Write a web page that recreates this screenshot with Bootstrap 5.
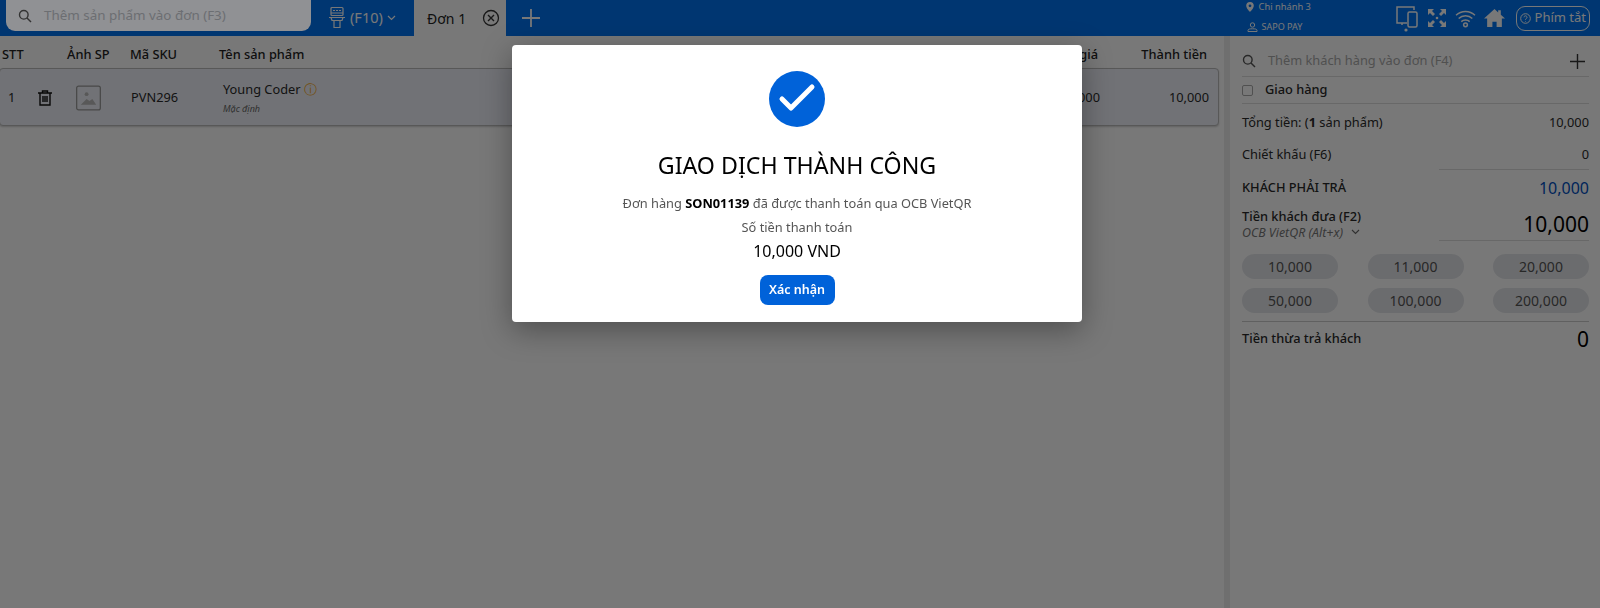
<!DOCTYPE html>
<html lang="vi">
<head>
  <meta charset="UTF-8">
  <title>Giao dịch thành công</title>
  <meta name="viewport" content="width=device-width, initial-scale=1">
  <link href="https://cdn.jsdelivr.net/npm/bootstrap@5.3.3/dist/css/bootstrap.min.css" rel="stylesheet">
  <style>
    html, body { height: 100%; overflow: hidden; }
    body { font-family: "Noto Sans", sans-serif; font-size: 12.8px; color: #2a2a2a; background: #fff; }
    .pos-topbar { height: 36px; background: #0074f0; }
    /* the reference keeps this field lighter than the dimmed page */
    .pos-search { position: relative; z-index: 1051; width: 305px; height: 31px; margin-left: 6px; background: #909194; border-radius: 0 0 9px 9px; padding: 0 12px; color: #6c6e72; font-size: 13.400px; }
    .pos-f10 { width: 86px; margin-left: 17px; color: #fff; font-size: 14.500px; }
    .pos-tab { width: 92px; height: 36px; background: #fff; color: #222; font-size: 14px; padding: 0 6px 0 13px; }
    .pos-plus { width: 50px; }
    .pos-branch { width: 152px; margin-left: auto; margin-bottom: 3px; font-size: 9.300px; color: #fff; line-height: 1; gap: 10px; }
    .pos-branch svg { flex: none; }
    .pos-pin { margin-left: 3px; gap: 5px; }
    .pos-pay-name { font-size: 9px; }
    .pos-shortcut { height: 25px; border: 1.5px solid #fff; border-radius: 9px; padding: 0 3px; color: #fff; font-size: 13px; margin: 0 10px 0 3px; }
    .pos-main { height: 572px; }
    .pos-left { width: 1224px; flex: none; }
    .pos-gutter { width: 6px; flex: none; background: #ececec; }
    .pos-right { flex: 1; padding: 10px 11px 0 12px; }
    .pos-grid { display: grid; grid-template-columns: 65px 63px 89px 1fr 44px 109px; }
    .pos-head { height: 32px; font-weight: 500; padding: 5px 17px 0 2px; color: #222; }
    .pos-row { grid-template-columns: 66px 65px 88px 1fr 44px 109px; height: 58px; margin-left: -1px; width: 1220px; border: 1px solid #bbb; border-radius: 4px; background: #f0f3fa; box-shadow: 0 1px 2px rgba(0,0,0,.2); padding: 2px 9px 0 0; }
    .pos-one { width: 30px; }
    .pos-thumb { padding-left: 10px; }
    .pos-info { color: #f5a623; }
    .pos-sub { font-size: 9px; font-style: italic; color: #666; margin-top: 3px; }
    .pos-cust { height: 31px; border-bottom: 1px solid #ddd; color: #aaa; }
    .pos-cust .pos-add { margin-right: 4px; }
    .pos-check { width: 11px; height: 11px; border: 1px solid #aaa; border-radius: 2px; margin-right: 12px; }
    .pos-ship { height: 27px; border-bottom: 1px solid #ddd; font-weight: 500; }
    .pos-line { height: 32px; }
    .pos-sum { margin-top: 3px; }
    .pos-duerow { margin-top: 1px; }
    .pos-amount { width: 150px; text-align: right; }
    .pos-under { border-bottom: 1px solid #ddd; padding-bottom: 5px; margin-top: 5px; }
    .pos-due { color: #0050c0; font-size: 16px; }
    .pos-pay { margin-top: 2px; }
    .pos-paylabel { line-height: 17px; font-weight: 500; }
    .pos-big { font-size: 21px; color: #000; line-height: 24px; }
    .pos-big.pos-under { margin-top: 6px; padding-bottom: 4px; }
    .pos-method { font-size: 12.400px; font-style: italic; color: #777; line-height: 15px; }
    .pos-pills { display: grid; grid-template-columns: repeat(3, 96px); justify-content: space-between; row-gap: 9px; margin-top: 13px; padding-bottom: 8px; border-bottom: 1px solid #ccc; }
    .pos-pill { height: 25px; border-radius: 13px; background: #e4e6ea; color: #555; font-size: 14px; }
    .pos-rest { margin-top: 5px; }
    .modal-backdrop.show { opacity: .53; }
    .pos-dialog { max-width: 570px; margin: 45px 0 0 512px; }
    .pos-dialog .modal-content { height: 277px; border: 0; border-radius: 4px; box-shadow: 0 8px 30px rgba(0,0,0,.35); padding-top: 26px; color: #000; }
    .pos-title { font-size: 23.200px; font-weight: 400; margin: 22px 0 0; line-height: 32px; }
    .pos-text { color: #555; margin-top: 10px; line-height: 24px; }
    .pos-total { font-size: 16px; line-height: 24px; }
    .pos-confirm { height: 30px; width: 75px; padding: 0; background: #0062d9; border: 0; border-radius: 8px; font-size: 12.500px; font-weight: 600; margin-top: 12px; }
  </style>
</head>
<body>

  <div class="pos-topbar d-flex align-items-center">
    <div class="pos-search d-flex align-items-center gap-2 align-self-start">
      <svg width="14" height="14" viewBox="0 0 14 14" fill="none" stroke="#333" stroke-width="1.4"><circle cx="5.8" cy="5.8" r="4.3"/><path d="M9 9l4 4"/></svg>
      <span class="ms-1">Thêm sản phẩm vào đơn (F3)</span>
    </div>
    <div class="pos-f10 d-flex align-items-center gap-1">
      <svg width="18" height="24" viewBox="0 0 18 24" fill="none" stroke="#fff" stroke-width="1.2"><rect x="3" y="1.500" width="12" height="8" rx="1"/><path d="M5 4.500h2M8 4.500h2M11 4.500h2M3 7h12M1 11.500h16M3 11.500l1 3h10l1-3M6 14.500v7h6v-7"/></svg>
      <span>(F10)</span>
      <svg width="9" height="6" viewBox="0 0 9 6" fill="none" stroke="#fff" stroke-width="1.2"><path d="M1 1l3.500 3.500L8 1"/></svg>
    </div>
    <div class="pos-tab d-flex align-items-center justify-content-between">
      <span>Đơn 1</span>
      <svg width="18" height="18" viewBox="0 0 18 18" fill="none" stroke="#333" stroke-width="1.3"><circle cx="9" cy="9" r="7.500"/><path d="M6 6l6 6M12 6l-6 6" stroke-width="1.400"/></svg>
    </div>
    <div class="pos-plus d-flex justify-content-center">
      <svg width="20" height="20" viewBox="0 0 20 20" stroke="#fff" stroke-width="1.800"><path d="M10 1v18M1 10h18"/></svg>
    </div>
    <div class="pos-branch d-flex flex-column">
      <div class="pos-pin d-flex align-items-center">
        <svg width="8" height="10" viewBox="0 0 8 10" fill="#fff"><path d="M4 0a3.800 3.800 0 0 0-3.800 3.800C.2 6.500 4 10 4 10s3.800-3.500 3.800-6.200A3.800 3.800 0 0 0 4 0zm0 5.200a1.400 1.400 0 1 1 0-2.800 1.400 1.400 0 0 1 0 2.800z"/></svg>
        <span>Chi nhánh 3</span>
      </div>
      <div class="pos-pay-name d-flex align-items-center gap-1 ms-1">
        <svg width="11" height="10" viewBox="0 0 11 10" fill="none" stroke="#fff"><circle cx="5.500" cy="3" r="2.200"/><path d="M1 9.500h9V8.500C10 7 8 6.800 5.500 6.800S1 7 1 8.500z"/></svg>
        <span>SAPO PAY</span>
      </div>
    </div>
    <div class="d-flex align-items-center gap-2">
      <svg width="24" height="28" viewBox="0 0 24 28" fill="none" stroke="#fff" stroke-width="1.500"><path d="M19 6V3H2v16h10M7 19v2"/><rect x="13" y="8" width="9" height="15" rx="1.500"/><circle cx="11" cy="26" r="1.600" fill="#fff" stroke="none"/></svg>
      <svg width="20" height="20" viewBox="0 0 20 20" fill="#fff"><path d="M1 1h6L5 3l3 3-2 2-3-3-2 2zM19 1v6l-2-2-3 3-2-2 3-3-2-2zM1 19v-6l2 2 3-3 2 2-3 3 2 2zM19 19h-6l2-2-3-3 2-2 3 3 2-2z"/><circle cx="10" cy="10" r="1.300"/></svg>
      <svg width="21" height="19" viewBox="0 0 20 18" fill="none" stroke="#fff" stroke-width="1.400"><path d="M1 6c5-5 13-5 18 0M3.500 9c3.500-3.500 9.500-3.500 13 0M6 12c2.200-2 5.800-2 8 0"/><circle cx="10" cy="15" r="1.800"/></svg>
      <svg width="21" height="20" viewBox="0 0 20 19" fill="#fff"><path d="M10 1L0 10h3v8h5v-5h4v5h5v-8h3l-4-3.600V2h-2.500v2.200z"/></svg>
      <div class="pos-shortcut d-flex align-items-center gap-1">
        <svg width="11" height="11" viewBox="0 0 11 11" fill="none" stroke="#fff"><circle cx="5.500" cy="5.500" r="4.800"/><path d="M4 4.300a1.500 1.500 0 1 1 2.300 1.300c-.6.300-.8.600-.8 1.100M5.500 8v.6"/></svg>
        <span>Phím tắt</span>
      </div>
    </div>
  </div>

  <div class="pos-main d-flex">
    <div class="pos-left">
      <div class="pos-grid pos-head align-items-center">
        <div>STT</div>
        <div>Ảnh SP</div>
        <div>Mã SKU</div>
        <div>Tên sản phẩm</div>
        <div class="text-end">giá</div>
        <div class="text-end">Thành tiền</div>
      </div>
      <div class="pos-grid pos-row align-items-center">
        <div class="d-flex align-items-center ps-2">
          <span class="pos-one">1</span>
          <svg width="14" height="16" viewBox="0 0 14 16" fill="none" stroke="#111" stroke-width="1.400"><path d="M0 3h14M4.500 3V1h5v2M2 3v12h10V3M5 6v6M7 6v6M9 6v6"/></svg>
        </div>
        <div class="pos-thumb">
          <svg width="25" height="26" viewBox="0 0 26 26" fill="none"><rect x=".7" y=".7" width="24.600" height="24.600" rx="2" stroke="#999" stroke-width="1.300"/><circle cx="11" cy="9" r="2" fill="#bbb"/><path d="M5 20l6-6 3 2 3-2 4 6z" fill="#bbb"/></svg>
        </div>
        <div>PVN296</div>
        <div class="ps-1">
          <div>Young Coder <span class="pos-info">ⓘ</span></div>
          <div class="pos-sub">Mặc định</div>
        </div>
        <div class="text-end">10,000</div>
        <div class="text-end">10,000</div>
      </div>
    </div>
    <div class="pos-gutter"></div>
    <div class="pos-right">
      <div class="pos-cust d-flex align-items-center gap-2">
        <svg width="14" height="14" viewBox="0 0 14 14" fill="none" stroke="#555" stroke-width="1.400"><circle cx="5.800" cy="5.800" r="4.300"/><path d="M9 9l4 4"/></svg>
        <span class="ms-1">Thêm khách hàng vào đơn (F4)</span>
        <svg class="ms-auto pos-add" width="15" height="15" viewBox="0 0 15 15" stroke="#333" stroke-width="1.400"><path d="M7.500 0v15M0 7.500h15"/></svg>
      </div>
      <div class="pos-ship d-flex align-items-center"><span class="pos-check"></span>Giao hàng</div>
      <div class="pos-line pos-sum d-flex align-items-center justify-content-between">
        <span>Tổng tiền: (<b>1</b> sản phẩm)</span><span>10,000</span>
      </div>
      <div class="pos-line d-flex align-items-center justify-content-between">
        <span>Chiết khấu (F6)</span><span class="pos-amount pos-under">0</span>
      </div>
      <div class="pos-line pos-duerow d-flex align-items-center justify-content-between">
        <span class="fw-medium">KHÁCH PHẢI TRẢ</span><span class="pos-due">10,000</span>
      </div>
      <div class="pos-pay d-flex align-items-center justify-content-between">
        <div>
          <div class="pos-paylabel">Tiền khách đưa (F2)</div>
          <div class="pos-method d-flex align-items-center gap-2">OCB VietQR (Alt+x)
            <svg width="9" height="6" viewBox="0 0 9 6" fill="none" stroke="#666" stroke-width="1.100"><path d="M1 1l3.500 3.500L8 1"/></svg>
          </div>
        </div>
        <span class="pos-amount pos-under pos-big">10,000</span>
      </div>
      <div class="pos-pills">
        <div class="pos-pill d-flex align-items-center justify-content-center">10,000</div>
        <div class="pos-pill d-flex align-items-center justify-content-center">11,000</div>
        <div class="pos-pill d-flex align-items-center justify-content-center">20,000</div>
        <div class="pos-pill d-flex align-items-center justify-content-center">50,000</div>
        <div class="pos-pill d-flex align-items-center justify-content-center">100,000</div>
        <div class="pos-pill d-flex align-items-center justify-content-center">200,000</div>
      </div>
      <div class="pos-rest d-flex align-items-center justify-content-between">
        <span class="fw-medium">Tiền thừa trả khách</span><span class="pos-big">0</span>
      </div>
    </div>
  </div>

  <div class="modal-backdrop show"></div>
  <div class="modal d-block" tabindex="-1">
    <div class="modal-dialog pos-dialog">
      <div class="modal-content text-center align-items-center">
        <svg width="56" height="56" viewBox="0 0 56 56"><circle cx="28" cy="28" r="28" fill="#0062d9"/><path d="M13 28l9 9 21-21" fill="none" stroke="#fff" stroke-width="5" stroke-linecap="round" stroke-linejoin="round"/></svg>
        <h2 class="pos-title">GIAO DỊCH THÀNH CÔNG</h2>
        <div class="pos-text">Đơn hàng <b class="text-black">SON01139</b> đã được thanh toán qua OCB VietQR<br>Số tiền thanh toán</div>
        <div class="pos-total">10,000 VND</div>
        <button type="button" class="btn btn-primary pos-confirm">Xác nhận</button>
      </div>
    </div>
  </div>

  <script src="https://cdn.jsdelivr.net/npm/bootstrap@5.3.3/dist/js/bootstrap.bundle.min.js"></script>
</body>
</html>
